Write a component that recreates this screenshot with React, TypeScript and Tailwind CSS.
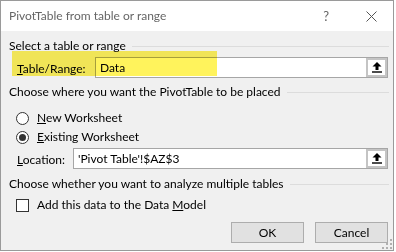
import React from "react";

const font = { fontFamily: 'Lato, "Noto Sans", sans-serif' };

function Header({ children }: { children: React.ReactNode }) {
  return (
    <div className="flex items-center h-4 pl-[8px] pr-[4px]">
      <span className="whitespace-nowrap">{children}</span>
      <div className="flex-1 h-px bg-[#dcdcdc] ml-[6px]" />
    </div>
  );
}

function UpButton() {
  return (
    <div className="w-[21px] h-full border-2 border-[#c4c4c4] bg-white flex items-center justify-center">
      <svg width="10" height="11" viewBox="0 0 10 11">
        <polygon points="5,0 9.5,4.5 0.5,4.5" fill="#000" />
        <rect x="3.5" y="4" width="3" height="4" fill="#000" />
        <rect x="0" y="9.3" width="10" height="1.4" fill="#000" />
      </svg>
    </div>
  );
}

function Radio({ checked }: { checked?: boolean }) {
  return (
    <div className="w-[13px] h-[13px] rounded-full border border-[#333] bg-white flex items-center justify-center">
      {checked && <div className="w-[7px] h-[7px] rounded-full bg-[#333]" />}
    </div>
  );
}

export default function App() {
  return (
    <div className="w-[396px] h-[252px] bg-white relative" style={font}>
      <div className="w-[394px] h-[251px] border border-[#9a9a9a] bg-[#f0f0f0] flex flex-col text-[12px] text-black leading-4 relative">
        {/* title bar */}
        <div className="h-[30px] bg-white flex items-center shrink-0">
          <span className="pl-[8px] text-[#666] flex-1">PivotTable from table or range</span>
          <span className="text-[#666] text-[13px] mr-[37px]">?</span>
          <svg width="11" height="11" viewBox="0 0 11 11" className="mr-[16px]">
            <line x1="0.5" y1="0.5" x2="10.5" y2="10.5" stroke="#555" strokeWidth="1" />
            <line x1="10.5" y1="0.5" x2="0.5" y2="10.5" stroke="#555" strokeWidth="1" />
          </svg>
        </div>

        <div className="mt-[7px]">
          <Header>Select a table or range</Header>
        </div>

        <div className="mt-[3px] h-[21px] flex items-center pl-[16px] pr-[5px]">
          <span className="w-[78px] pt-[2px]">
            <u>T</u>able/Range:
          </span>
          <div className="flex-1 h-full border border-[#a6a6a6] bg-white flex items-center">
            <span className="flex-1 pl-[4px] pt-[1px]">Data</span>
            <UpButton />
          </div>
        </div>

        <div className="mt-[6px]">
          <Header>Choose where you want the PivotTable to be placed</Header>
        </div>

        <div className="mt-[10px] h-4 flex items-center pl-[15px]">
          <Radio />
          <span className="ml-[8px]">
            <u>N</u>ew Worksheet
          </span>
        </div>
        <div className="mt-[3px] h-4 flex items-center pl-[15px]">
          <Radio checked />
          <span className="ml-[8px]">
            <u>E</u>xisting Worksheet
          </span>
        </div>

        <div className="mt-[3px] h-[21px] flex items-center pl-[16px] pr-[5px]">
          <span className="w-[56px] pt-[2px]">
            <u>L</u>ocation:
          </span>
          <div className="flex-1 h-full border border-[#a6a6a6] bg-white flex items-center">
            <span className="flex-1 pl-[4px] pt-[1px]">'Pivot Table'!$AZ$3</span>
            <UpButton />
          </div>
        </div>

        <div className="mt-[7px]">
          <Header>Choose whether you want to analyze multiple tables</Header>
        </div>

        <div className="mt-[5px] h-4 flex items-center pl-[15px]">
          <div className="w-[13px] h-[13px] border border-[#333] bg-white" />
          <span className="ml-[8px]">
            Add this data to the Data <u>M</u>odel
          </span>
        </div>

        <div className="mt-[9px] flex justify-end gap-[11px] pr-[5px]">
          <button className="w-[73px] h-[21px] bg-[#e1e1e1] border border-[#adadad] text-[12px] leading-4">OK</button>
          <button className="w-[73px] h-[21px] bg-[#e1e1e1] border border-[#adadad] text-[12px] leading-4">Cancel</button>
        </div>

        <svg width="10" height="10" viewBox="0 0 10 10" className="absolute right-[1px] bottom-[1px]">
          <rect x="8" y="0" width="2" height="2" fill="#b0b0b0" />
          <rect x="4" y="4" width="2" height="2" fill="#b0b0b0" />
          <rect x="8" y="4" width="2" height="2" fill="#b0b0b0" />
          <rect x="0" y="8" width="2" height="2" fill="#b0b0b0" />
          <rect x="4" y="8" width="2" height="2" fill="#b0b0b0" />
          <rect x="8" y="8" width="2" height="2" fill="#b0b0b0" />
        </svg>

        {/* highlighter overlay */}
        <div className="absolute left-[11px] top-[50px] w-[205px] h-[25px] bg-[#fff35c] mix-blend-multiply pointer-events-none" />
      </div>
    </div>
  );
}
